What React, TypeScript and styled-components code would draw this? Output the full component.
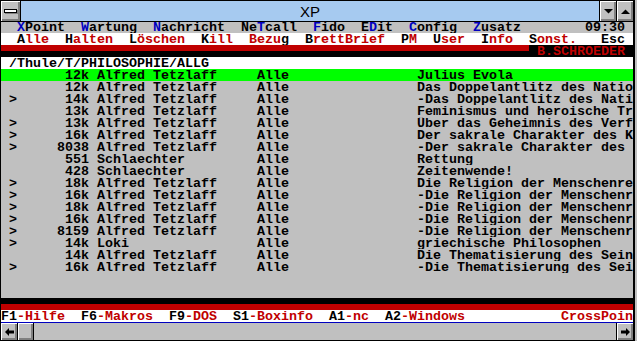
import React from 'react';
import styled, { createGlobalStyle } from 'styled-components';

const RED = '#c00000';
const BLUE = '#0000c0';
const GRAY = '#c0c0c0';

type Item = { label: string; key: number; keyLen?: number; extra?: number };

const topMenu: Item[] = [
  { label: 'XPoint', key: 0 },
  { label: 'Wartung', key: 0 },
  { label: 'Nachricht', key: 0 },
  { label: 'NeTcall', key: 2 },
  { label: 'Fido', key: 0 },
  { label: 'EDit', key: 1 },
  { label: 'Config', key: 0 },
  { label: 'Zusatz', key: 0 },
];

const subMenu: Item[] = [
  { label: 'Alle', key: 0 },
  { label: 'Halten', key: 0 },
  { label: 'Löschen', key: 0 },
  { label: 'Kill', key: 0 },
  { label: 'Bezug', key: 4 },
  { label: 'BrettBrief', key: 0 },
  { label: 'PM', key: 0 },
  { label: 'User', key: 0 },
  { label: 'Info', key: 0 },
  { label: 'Sonst.', key: 0 },
  { label: 'Esc', key: 0, keyLen: 3, extra: 8 },
];

const fkeys = [
  { key: 'F1', label: '-Hilfe' },
  { key: 'F6', label: '-Makros' },
  { key: 'F9', label: '-DOS' },
  { key: 'S1', label: '-Boxinfo' },
  { key: 'A1', label: '-nc' },
  { key: 'A2', label: '-Windows' },
];

type Msg = { mark?: boolean; size: string; from: string; subject: string; current?: boolean };

const messages: Msg[] = [
  { size: '12k', from: 'Alfred Tetzlaff', subject: 'Julius Evola', current: true },
  { size: '12k', from: 'Alfred Tetzlaff', subject: 'Das Doppelantlitz des Nationalsozialismus' },
  { mark: true, size: '14k', from: 'Alfred Tetzlaff', subject: '-Das Doppelantlitz des Nationalsozialismus' },
  { size: '13k', from: 'Alfred Tetzlaff', subject: 'Feminismus und heroische Tradition' },
  { mark: true, size: '13k', from: 'Alfred Tetzlaff', subject: 'Über das Geheimnis des Verfalls' },
  { mark: true, size: '16k', from: 'Alfred Tetzlaff', subject: 'Der sakrale Charakter des Königtums' },
  { mark: true, size: '8038', from: 'Alfred Tetzlaff', subject: '-Der sakrale Charakter des Königtums' },
  { size: '551', from: 'Schlaechter', subject: 'Rettung' },
  { size: '428', from: 'Schlaechter', subject: 'Zeitenwende!' },
  { mark: true, size: '18k', from: 'Alfred Tetzlaff', subject: 'Die Religion der Menschenrechte' },
  { mark: true, size: '16k', from: 'Alfred Tetzlaff', subject: '-Die Religion der Menschenrechte' },
  { mark: true, size: '18k', from: 'Alfred Tetzlaff', subject: '-Die Religion der Menschenrechte' },
  { mark: true, size: '16k', from: 'Alfred Tetzlaff', subject: '-Die Religion der Menschenrechte' },
  { mark: true, size: '8159', from: 'Alfred Tetzlaff', subject: '-Die Religion der Menschenrechte' },
  { mark: true, size: '14k', from: 'Loki', subject: 'griechische Philosophen' },
  { size: '14k', from: 'Alfred Tetzlaff', subject: 'Die Thematisierung des Seins' },
  { mark: true, size: '16k', from: 'Alfred Tetzlaff', subject: '-Die Thematisierung des Seins' },
];

const MenuLabel: React.FC<{ item: Item; keyColor: string }> = ({ item, keyColor }) => {
  const len = item.keyLen ?? 1;
  const before = item.label.slice(0, item.key);
  const hot = item.label.slice(item.key, item.key + len);
  const after = item.label.slice(item.key + len);
  return (
    <MenuEntry $extra={item.extra}>
      {before}
      <Hot $color={keyColor}>{hot}</Hot>
      {after}
    </MenuEntry>
  );
};

const App: React.FC = () => {
  return (
    <>
      <GlobalStyle />
      <Window>
        <TitleBar>
          <SysMenu>
            <SysBar />
          </SysMenu>
          <Caption>XP</Caption>
          <TitleButton>
            <svg width="9" height="5" viewBox="0 0 9 5">
              <path d="M0 0 H9 L4.5 4.5 Z" fill="#000" />
            </svg>
          </TitleButton>
          <TitleButton>
            <svg width="9" height="5" viewBox="0 0 9 5">
              <path d="M0 5 H9 L4.5 0.5 Z" fill="#000" />
            </svg>
          </TitleButton>
        </TitleBar>

        <Screen>
          <MenuBar>
            {topMenu.map((m) => (
              <MenuLabel key={m.label} item={m} keyColor={BLUE} />
            ))}
            <Clock>09:30</Clock>
          </MenuBar>

          <SubMenu>
            {subMenu.map((m) => (
              <MenuLabel key={m.label} item={m} keyColor="#000" />
            ))}
          </SubMenu>

          <SplitLine $top={RED} $bottom="#000">
            <UserBadge>B.SCHROEDER</UserBadge>
          </SplitLine>

          <PathLine>/Thule/T/PHILOSOPHIE/ALLG</PathLine>

          <MessageList>
            {messages.map((m, i) => (
              <MessageRow key={i} $current={m.current}>
                <Mark>{m.mark ? '>' : ''}</Mark>
                <Size>{m.size}</Size>
                <From>{m.from}</From>
                <To>Alle</To>
                <Subject>{m.subject}</Subject>
              </MessageRow>
            ))}
          </MessageList>

          <SplitLine $top="#000" $bottom={RED} />

          <StatusLine>
            {fkeys.map((f) => (
              <FKey key={f.key}>
                {f.key}
                <Hot $color={RED}>{f.label}</Hot>
              </FKey>
            ))}
            <Brand>CrossPoint</Brand>
          </StatusLine>
        </Screen>

        <ScrollBar>
          <ScrollButton>
            <svg width="9" height="8" viewBox="0 0 9 8">
              <path d="M0 4 L4 0 V2.5 H9 V5.5 H4 V8 Z" fill="#000" />
            </svg>
          </ScrollButton>
          <Thumb />
          <Track />
          <ScrollButton>
            <svg width="9" height="8" viewBox="0 0 9 8">
              <path d="M9 4 L5 0 V2.5 H0 V5.5 H5 V8 Z" fill="#000" />
            </svg>
          </ScrollButton>
        </ScrollBar>
      </Window>
    </>
  );
};

const GlobalStyle = createGlobalStyle`
  html, body {
    margin: 0;
    padding: 0;
    background: ${GRAY};
  }
  body {
    width: 637px;
    height: 341px;
    overflow: hidden;
  }
`;

const Window = styled.div`
  width: 635px;
  height: 341px;
  box-sizing: border-box;
  display: flex;
  flex-direction: column;
  background: ${GRAY};
  border: 1px solid #000;
  border-right-width: 2px;
  overflow: hidden;
`;

const TitleBar = styled.div`
  display: flex;
  height: 20px;
  border-bottom: 1px solid #000;
  flex-shrink: 0;
`;

const bevel = `
  background: ${GRAY};
  box-shadow: inset 1px 1px 0 #fff, inset -1px -1px 0 #808080, inset -2px -2px 0 #808080;
`;

const SysMenu = styled.div`
  width: 19px;
  border-right: 1px solid #000;
  display: flex;
  align-items: center;
  justify-content: center;
  ${bevel}
`;

const SysBar = styled.div`
  width: 11px;
  height: 2px;
  background: #fff;
  border: 1px solid #000;
  box-shadow: 1px 1px 0 #808080;
`;

const Caption = styled.div`
  flex: 1;
  background: #a6caf0;
  display: flex;
  align-items: center;
  justify-content: center;
  font-family: 'Liberation Sans', Arial, sans-serif;
  font-size: 15px;
  color: #000;
`;

const TitleButton = styled.div`
  width: 16px;
  border-left: 1px solid #000;
  display: flex;
  align-items: center;
  justify-content: center;
  ${bevel}
`;

const Screen = styled.div`
  flex: 1;
  display: flex;
  flex-direction: column;
  font-family: 'Liberation Mono', 'DejaVu Sans Mono', monospace;
  font-size: 13.333px;
  font-weight: bold;
  line-height: 14px;
  white-space: pre;
  color: #000;
  overflow: hidden;
`;

const Line = styled.div`
  height: 12px;
  display: flex;
  flex-shrink: 0;
`;

const MenuBar = styled(Line)`
  height: 11px;
  line-height: 12px;
  background: ${GRAY};
  padding-left: 16px;
  gap: 16px;
`;

const SubMenu = styled(Line)`
  background: #fff;
  color: ${RED};
  padding-left: 16px;
  gap: 16px;
`;

const MenuEntry = styled.span<{ $extra?: number }>`
  margin-left: ${(p) => p.$extra ?? 0}px;
`;

const Hot = styled.span<{ $color: string }>`
  color: ${(p) => p.$color};
`;

const Clock = styled.span`
  margin-left: 48px;
`;

const SplitLine = styled(Line)<{ $top: string; $bottom: string }>`
  background: linear-gradient(${(p) => p.$top} 50%, ${(p) => p.$bottom} 50%);
  justify-content: flex-end;
`;

const UserBadge = styled.div`
  width: 104px;
  box-sizing: border-box;
  padding-left: 8px;
  background: #000;
  color: ${RED};
`;

const PathLine = styled(Line)`
  background: #fff;
  padding-left: 8px;
`;

const MessageList = styled.div`
  flex: 1;
  display: flex;
  flex-direction: column;
  background: ${GRAY};
`;

const MessageRow = styled(Line)<{ $current?: boolean }>`
  background: ${(p) => (p.$current ? '#00ff00' : 'transparent')};
`;

const Mark = styled.span`
  width: 16px;
  box-sizing: border-box;
  padding-left: 8px;
`;

const Size = styled.span`
  width: 72px;
  text-align: right;
`;

const From = styled.span`
  width: 160px;
  margin-left: 8px;
`;

const To = styled.span`
  width: 160px;
`;

const Subject = styled.span`
  flex: 1;
  overflow: hidden;
`;

const StatusLine = styled(Line)`
  background: #fff;
  gap: 16px;
  border-bottom: 1px solid ${BLUE};
  height: 13px;
  box-sizing: border-box;
`;

const FKey = styled.span``;

const Brand = styled.span`
  color: ${RED};
  margin-left: 80px;
`;

const ScrollBar = styled.div`
  height: 17px;
  display: flex;
  flex-shrink: 0;
  background: ${GRAY};
`;

const ScrollButton = styled.div`
  width: 16px;
  display: flex;
  align-items: center;
  justify-content: center;
  border-right: 1px solid #000;
  ${bevel}

  &:last-child {
    border-right: none;
    border-left: 1px solid #000;
  }
`;

const Thumb = styled.div`
  width: 15px;
  border-right: 1px solid #000;
  ${bevel}
`;

const Track = styled.div`
  flex: 1;
  background: ${GRAY};
`;

export default App;
